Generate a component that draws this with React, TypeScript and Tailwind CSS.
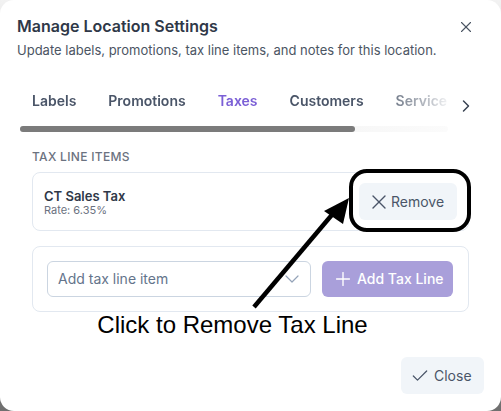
import React from "react";
import { X, ChevronRight, ChevronDown, Plus, Check } from "lucide-react";

const tabs = [
  { label: "Labels", active: false },
  { label: "Promotions", active: false },
  { label: "Taxes", active: true },
  { label: "Customers", active: false },
  { label: "Service", active: false },
];

export default function App() {
  return (
    <div
      className="w-[501px] h-[411px] bg-gradient-to-b from-[#f2f2f2] to-[#6f6f6f] overflow-hidden"
      style={{ fontFamily: "Inter, 'Noto Sans', sans-serif" }}
    >
      <div className="relative w-[501px] h-[411px] bg-white rounded-[14px] overflow-hidden">
        {/* header */}
        <div className="flex items-start justify-between pl-[17px] pr-[26px] pt-[14px]">
          <div>
            <h2 className="text-base leading-6 font-semibold text-[#2f3848]">Manage Location Settings</h2>
            <p className="text-[13px] leading-5 text-[#4b5563] mt-[2px]">
              Update labels, promotions, tax line items, and notes for this location.
            </p>
          </div>
          <X className="w-[18px] h-[18px] text-[#4b5563] mt-[4px]" strokeWidth={1.5} />
        </div>

        {/* tabs */}
        <div className="flex items-center mt-[23px] pl-[16px]">
          <div
            className="flex w-[436px] overflow-hidden"
            style={{ maskImage: "linear-gradient(to right, black 82%, rgba(0,0,0,0.35) 95%, transparent 100%)" }}
          >
            {tabs.map((t) => (
              <div
                key={t.label}
                className={
                  "px-4 py-2 text-sm leading-5 font-semibold whitespace-nowrap " +
                  (t.active ? "text-[#7b5fd6]" : "text-[#4a5568]")
                }
              >
                {t.label}
              </div>
            ))}
          </div>
          <ChevronRight className="w-[20px] h-[20px] text-[#374151] ml-[4px] mt-[10px]" strokeWidth={1.75} />
        </div>

        {/* scrollbar */}
        <div className="ml-[20px] mt-[7px] w-[428px] h-[6px] rounded-full bg-gradient-to-r from-[#eeeeee] via-[#f2f2f2] to-[#fbfbfb]">
          <div className="w-[335px] h-[6px] rounded-full bg-[#7b7b7b]" />
        </div>

        {/* content */}
        <div className="px-[32px] mt-[17px]">
          <div className="text-xs leading-4 font-medium tracking-wide text-[#6b7280]">TAX LINE ITEMS</div>

          <div className="mt-[7px] h-[59px] border border-[#e2e8f0] rounded-lg flex items-center justify-between pl-[11px] pr-[11px]">
            <div className="flex flex-col pt-[3px]">
              <span className="text-[13px] leading-4 font-semibold text-[#2f3848]">CT Sales Tax</span>
              <span className="text-[11px] leading-4 text-[#6b7280] -mt-[2px]">Rate: 6.35%</span>
            </div>
            <button className="flex items-center h-[37px] w-[98px] pl-[8px] rounded-md bg-[#f1f5f9] text-sm text-[#4a5568]">
              <X className="w-[24px] h-[24px]" strokeWidth={1.4} />
              Remove
            </button>
          </div>

          <div className="mt-[15px] h-[66px] border border-[#e2e8f0] rounded-lg flex items-center gap-[11px] px-[14px]">
            <div className="w-[264px] h-[36px] border border-[#cbd5e1] rounded-md flex items-center justify-between pl-[10px] pr-[6px]">
              <span className="text-sm text-[#64748b]">Add tax line item</span>
              <ChevronDown className="w-[24px] h-[24px] text-[#94a3b8]" strokeWidth={1.2} />
            </div>
            <button className="w-[131px] h-[36px] pl-[10px] rounded-md bg-[#a99fda] text-white text-sm font-medium flex items-center gap-[3px]">
              <Plus className="w-[22px] h-[22px]" strokeWidth={1.5} />
              Add Tax Line
            </button>
          </div>
        </div>

        <div
          className="text-center text-[24px] leading-[28px] text-black -mt-[1px] pr-[36px]"
          style={{ fontFamily: "'Liberation Sans', Arial, sans-serif" }}
        >
          Click to Remove Tax Line
        </div>

        {/* footer */}
        <div className="flex justify-end pr-[17px] mt-[18px]">
          <button className="flex items-center gap-[4px] h-[37px] w-[83px] pl-[9px] rounded-md bg-[#f1f5f9] text-sm text-[#4a5568]">
            <Check className="w-[20px] h-[20px]" strokeWidth={1.5} />
            Close
          </button>
        </div>

        {/* annotation */}
        <div className="absolute left-[349px] top-[169px] w-[122px] h-[63px] border-[4px] border-black rounded-[18px]" />
        <svg className="absolute left-0 top-0 pointer-events-none" width="501" height="411">
          <line x1="254" y1="307" x2="336" y2="210" stroke="black" strokeWidth="4.5" />
          <polygon points="349,198 324,211 343,224" fill="black" />
        </svg>
      </div>
    </div>
  );
}
